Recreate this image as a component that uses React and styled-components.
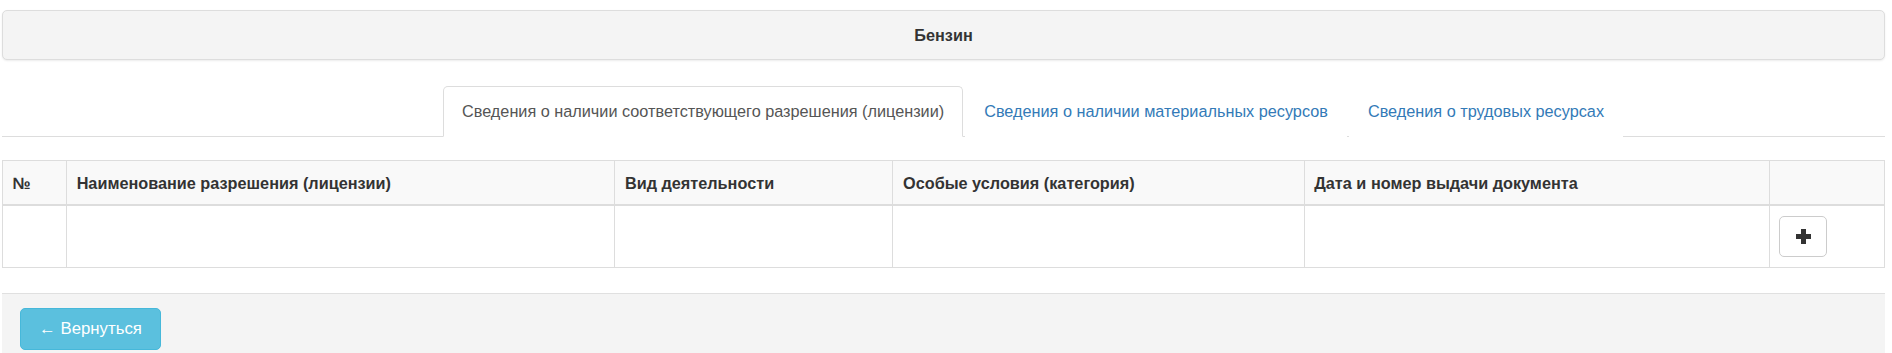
import React from "react";
import styled, { createGlobalStyle } from "styled-components";

const GlobalStyle = createGlobalStyle`
  html, body {
    margin: 0;
    padding: 0;
    background: #fff;
  }
  body {
    font-family: "Liberation Sans", Arial, "Helvetica Neue", sans-serif;
    font-size: 16.25px;
    line-height: 24px;
    color: #333;
  }
  * {
    box-sizing: border-box;
  }
`;

const tabs = [
  "Сведения о наличии соответствующего разрешения (лицензии)",
  "Сведения о наличии материальных ресурсов",
  "Сведения о трудовых ресурсах",
];

const columns = [
  { title: "№", width: 64 },
  { title: "Наименование разрешения (лицензии)", width: 548 },
  { title: "Вид деятельности", width: 278 },
  { title: "Особые условия (категория)", width: 411 },
  { title: "Дата и номер выдачи документа", width: 465 },
  { title: "", width: 115 },
];

const PlusIcon = () => (
  <svg width="15" height="15" viewBox="0 0 15 15">
    <rect x="5" y="0" width="5" height="15" fill="#333" />
    <rect x="0" y="5" width="15" height="5" fill="#333" />
  </svg>
);

const App = () => {
  return (
    <>
      <GlobalStyle />
      <Page>
        <Panel>
          <PanelHeading>Бензин</PanelHeading>
        </Panel>

        <Tabs>
          {tabs.map((t, i) => (
            <Tab key={t} active={i === 0}>
              <TabLink active={i === 0}>{t}</TabLink>
            </Tab>
          ))}
        </Tabs>

        <Table>
          <colgroup>
            {columns.map((c, i) => (
              <col key={i} style={{ width: c.width }} />
            ))}
          </colgroup>
          <thead>
            <tr>
              {columns.map((c, i) => (
                <Th key={i}>{c.title}</Th>
              ))}
            </tr>
          </thead>
          <tbody>
            <tr>
              <Td />
              <Td />
              <Td />
              <Td />
              <Td />
              <Td>
                <AddButton type="button">
                  <PlusIcon />
                </AddButton>
              </Td>
            </tr>
          </tbody>
        </Table>

        <Footer>
          <BackButton type="button">← Вернуться</BackButton>
        </Footer>
      </Page>
    </>
  );
};

export default App;

const Page = styled.div`
  padding: 10px 7px 0 2px;
`;

const Panel = styled.div`
  border: 1px solid #ddd;
  border-radius: 5px;
  background: #f4f4f4;
  box-shadow: 0 1px 2px rgba(0, 0, 0, 0.08);
  margin-bottom: 26px;
`;

const PanelHeading = styled.div`
  padding: 12px 18px;
  text-align: center;
  font-weight: bold;
  color: #333;
`;

const Tabs = styled.ul`
  display: flex;
  list-style: none;
  margin: 0 0 23px;
  padding: 0 0 0 441px;
  border-bottom: 1px solid #ddd;
`;

const Tab = styled.li`
  margin-right: 2px;
  margin-bottom: -1px;
  border: 1px solid ${(p) => (p.active ? "#ddd" : "transparent")};
  border-bottom-color: ${(p) => (p.active ? "#fff" : "transparent")};
  border-radius: 5px 5px 0 0;
  background: #fff;
`;

const TabLink = styled.a`
  display: block;
  padding: 12px 18px 13px;
  color: ${(p) => (p.active ? "#555" : "#337ab7")};
  text-decoration: none;
  cursor: pointer;
`;

const Table = styled.table`
  width: 100%;
  border-collapse: collapse;
  table-layout: fixed;
  border: 1px solid #ddd;
  margin-bottom: 25px;
`;

const Th = styled.th`
  text-align: left;
  font-weight: bold;
  padding: 9.6px;
  background: #f9f9f9;
  border: 1px solid #ddd;
  border-bottom: 2px solid #ddd;
  white-space: nowrap;
`;

const Td = styled.td`
  padding: 9.6px;
  border: 1px solid #ddd;
  height: 62px;
  vertical-align: top;
`;

const AddButton = styled.button`
  display: flex;
  align-items: center;
  justify-content: center;
  width: 48px;
  height: 41px;
  background: #fff;
  border: 1px solid #ccc;
  border-radius: 5px;
  cursor: pointer;
  padding: 0;
`;

const Footer = styled.div`
  background: #f4f4f4;
  border-top: 1px solid #e0e0e0;
  padding: 14px 18px;
`;

const BackButton = styled.button`
  font-family: "Liberation Sans", Arial, sans-serif;
  font-size: 16.8px;
  line-height: 24px;
  color: #fff;
  background: #5bc0de;
  border: 1px solid #46b8da;
  border-radius: 5px;
  padding: 8px 18px;
  cursor: pointer;
`;
